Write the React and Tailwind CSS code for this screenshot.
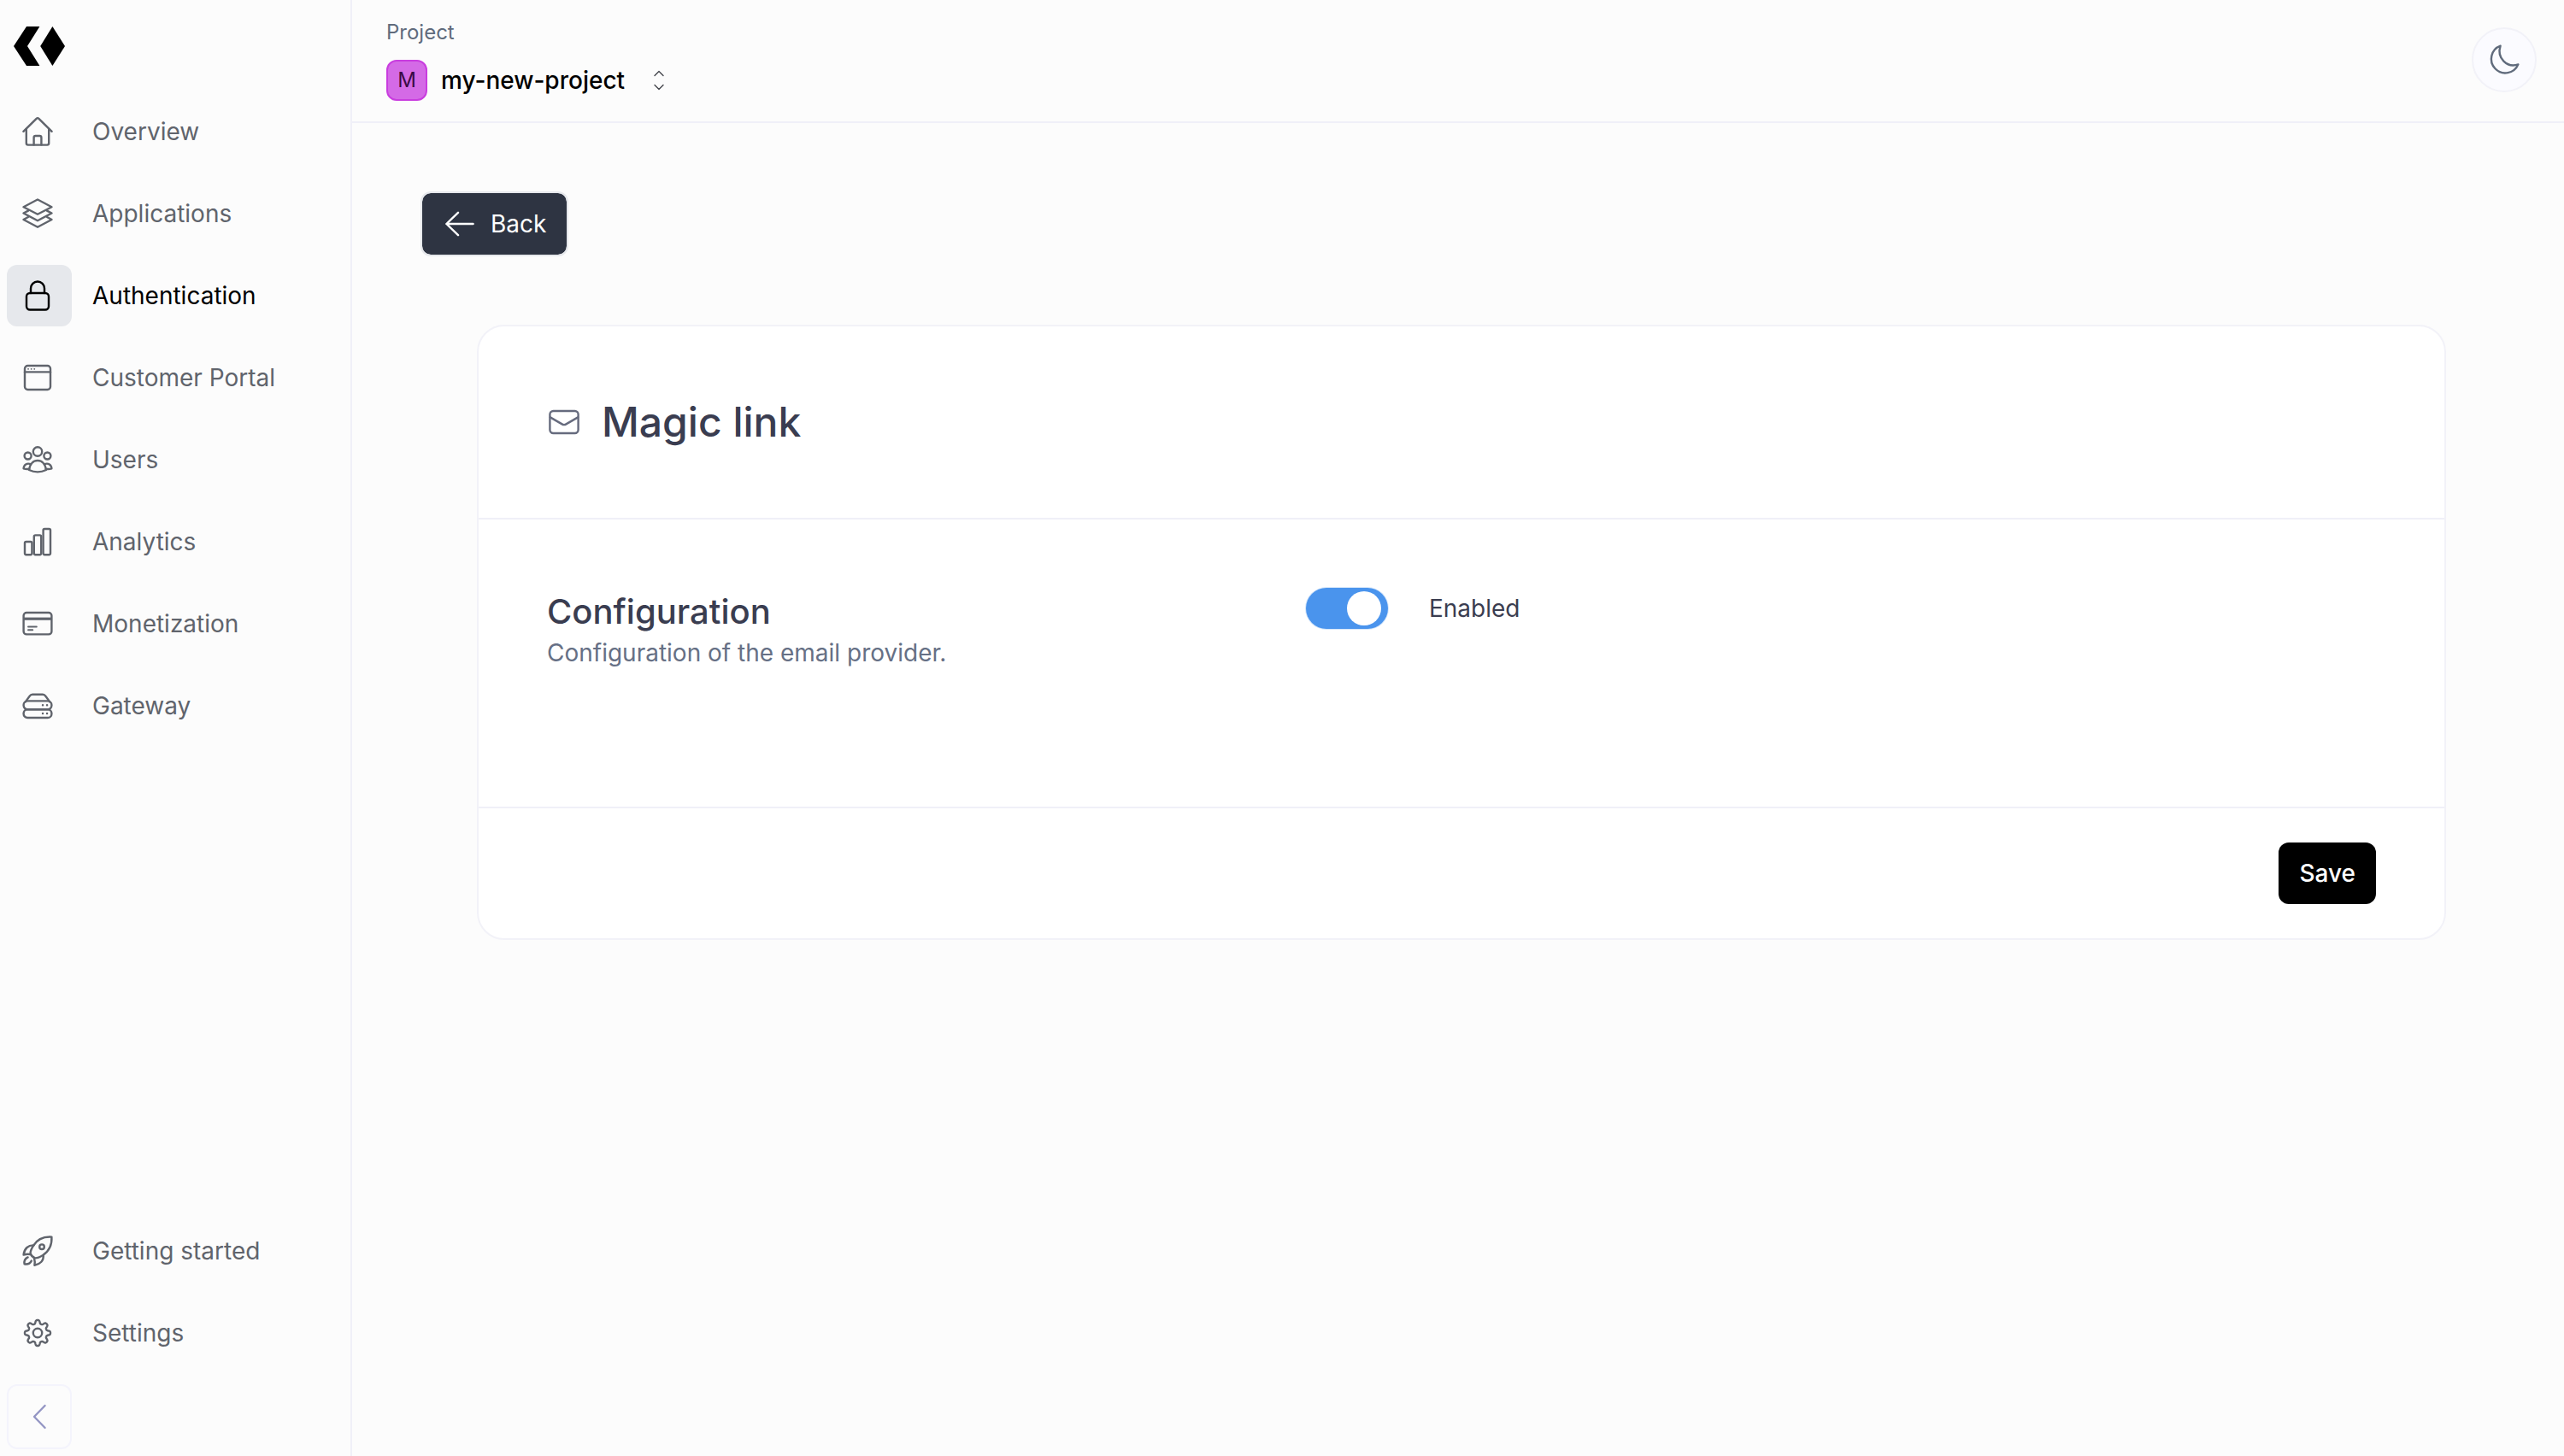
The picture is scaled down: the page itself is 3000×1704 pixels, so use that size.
import React from "react";

const svgProps = {
  viewBox: "0 0 40 40",
  width: 40,
  height: 40,
  fill: "none",
  stroke: "currentColor",
  strokeWidth: 2.4,
  strokeLinecap: "round",
  strokeLinejoin: "round",
  "aria-hidden": true,
};

const Icon = ({ children }) => (
  <svg {...svgProps} className="shrink-0">
    {children}
  </svg>
);

const HomeIcon = () => (
  <Icon>
    <path d="M3.4 19.8 L18.6 4.8 Q20 3.4 21.4 4.8 L36.6 19.8" />
    <path d="M6.8 17 V33.6 Q6.8 35.6 8.8 35.6 H31.2 Q33.2 35.6 33.2 33.6 V17" />
    <path d="M15.6 35.4 V27 Q15.6 25 17.6 25 H22.4 Q24.4 25 24.4 27 V35.4" />
  </Icon>
);

const LayersIcon = () => (
  <Icon>
    <path d="M20 3.5 L36.5 12.2 L20 20.8 L3.5 12.2 Z" />
    <path d="M9 16.6 L3.5 19.5 L20 28.2 L36.5 19.5 L31 16.6" />
    <path d="M9 24 L3.5 27 L20 35.8 L36.5 27 L31 24" />
  </Icon>
);

const LockIcon = () => (
  <Icon>
    <rect x="7" y="17" width="26" height="19.5" rx="4" />
    <path d="M12 17 V11.5 A8 8 0 0 1 28 11.5 V17" />
  </Icon>
);

const BrowserIcon = () => (
  <Icon>
    <rect x="5" y="6" width="30" height="28" rx="3.5" />
    <path d="M5 13.4 H35" />
    <path d="M9 9.8 H9.1 M12.6 9.8 H12.7 M16.2 9.8 H16.3" strokeWidth="1.8" />
  </Icon>
);

const UsersIcon = () => (
  <Icon>
    <circle cx="20" cy="10.5" r="5.2" />
    <circle cx="8.6" cy="15.5" r="4" />
    <circle cx="31.4" cy="15.5" r="4" />
    <path d="M10 32 C11 25 15 21 20 21 C25 21 29 25 30 32 C24 35 16 35 10 32 Z" />
    <path d="M12 25.2 C7.5 23.4 3.8 26 3.6 30.3 C5.5 31 8 31.1 10.2 30.8" />
    <path d="M28 25.2 C32.5 23.4 36.2 26 36.4 30.3 C34.5 31 32 31.1 29.8 30.8" />
  </Icon>
);

const BarsIcon = () => (
  <Icon>
    <rect x="5" y="20" width="8.4" height="15.2" rx="1.6" />
    <rect x="15.8" y="12.4" width="8.4" height="22.8" rx="1.6" />
    <rect x="26.6" y="5" width="8.4" height="30.2" rx="1.6" />
  </Icon>
);

const CardIcon = () => (
  <Icon>
    <rect x="3.6" y="7" width="32.8" height="25.4" rx="3.5" />
    <path d="M4 14.2 H36" strokeWidth="3.2" strokeLinecap="butt" />
    <path d="M9 23.4 H18.8 M9 27.2 H14.2" strokeWidth="2" />
  </Icon>
);

const ServerIcon = () => (
  <Icon>
    <rect x="3.6" y="14.4" width="32.8" height="9.8" rx="4.6" />
    <rect x="3.6" y="24.2" width="32.8" height="9.8" rx="4.6" />
    <path d="M5.6 15.6 L10.6 8.8 Q12 6.8 14 6.8 H26 Q28 6.8 29.4 8.8 L34.4 15.6" />
    <path d="M26 19.2 H26.1 M31 19.2 H31.1 M26 29 H26.1 M31 29 H31.1" />
  </Icon>
);

const RocketIcon = () => (
  <Icon>
    <path d="M36.4 3.6 C27 3 19.6 6.4 15 13.8 C12.6 17.6 11.4 20.2 11.6 23 C12.6 25.6 14.4 27.4 17 28.4 C19.8 28.6 22.6 27.2 26.2 25 C33.4 20.2 37 13 36.4 3.6 Z" />
    <circle cx="25" cy="15.2" r="2.8" />
    <path d="M15.6 13.4 C9.4 13 4.4 17 3.6 24.6 Q7.6 23.2 11.4 24" />
    <path d="M26.8 25 C27.2 31.2 23.2 35.6 16.4 36.8 Q17.2 32.6 16 28.6" />
    <path d="M8.6 27.4 C5.2 29 4 32 4.6 35.4 C8.2 36 11.2 34.8 12.8 31.6" />
  </Icon>
);

const gearPath = (() => {
  const points = [];
  const steps = 160;
  for (let i = 0; i < steps; i += 1) {
    const angle = (i / steps) * Math.PI * 2;
    const radius = 13 + (2 * Math.tanh(1.8 * Math.cos(8 * angle))) / Math.tanh(1.8);
    points.push(`${(20 + radius * Math.sin(angle)).toFixed(2)} ${(20 - radius * Math.cos(angle)).toFixed(2)}`);
  }
  return `M${points.join(" L")} Z`;
})();

const GearIcon = () => (
  <Icon>
    <path d={gearPath} />
    <circle cx="20" cy="20" r="5.2" />
  </Icon>
);

const mainNav = [
  { label: "Overview", Glyph: HomeIcon },
  { label: "Applications", Glyph: LayersIcon },
  { label: "Authentication", Glyph: LockIcon, active: true },
  { label: "Customer Portal", Glyph: BrowserIcon },
  { label: "Users", Glyph: UsersIcon },
  { label: "Analytics", Glyph: BarsIcon },
  { label: "Monetization", Glyph: CardIcon },
  { label: "Gateway", Glyph: ServerIcon },
];

const footerNav = [
  { label: "Getting started", Glyph: RocketIcon },
  { label: "Settings", Glyph: GearIcon },
];

function NavItem({ label, Glyph, active }) {
  return (
    <a
      href="#"
      aria-current={active ? "page" : undefined}
      className={active ? "flex items-center gap-6 text-black" : "flex items-center gap-6 text-[#60646c]"}
    >
      <span
        className={
          active
            ? "flex h-18 w-19 items-center rounded-xl bg-[#e6e8ec] pl-4"
            : "flex h-18 w-19 items-center rounded-xl pl-4"
        }
      >
        <Glyph />
      </span>
      {label}
    </a>
  );
}

function Sidebar() {
  return (
    <aside className="flex w-[412px] shrink-0 flex-col border-r-2 border-[#f0f0f8] p-2">
      <a href="#" aria-label="Home" className="mt-5 mb-10 ml-2 self-start">
        <svg viewBox="0 0 60 50" width="60" height="50" fill="black" aria-hidden="true">
          <path d="M15 3 H30.4 L16 26 L30.4 49 H15 L0 26 Z" />
          <path d="M45.4 3 L60 26 L45.4 49 L31.2 26 Z" />
        </svg>
      </a>
      <nav className="flex flex-1 flex-col gap-6">
        {mainNav.map((item) => (
          <NavItem key={item.label} {...item} />
        ))}
      </nav>
      <nav className="flex flex-col gap-6">
        {footerNav.map((item) => (
          <NavItem key={item.label} {...item} />
        ))}
      </nav>
      <button
        type="button"
        aria-label="Collapse sidebar"
        className="mt-6 flex size-19 items-center justify-center rounded-xl border-2 border-[#f4f4fc] text-[#9496c4]"
      >
        <Icon>
          <path d="M26.6 7 L14 20 L26.6 33" />
        </Icon>
      </button>
    </aside>
  );
}

function Header() {
  return (
    <header className="flex h-36 items-start justify-between border-b-2 border-[#f0f0f8] pr-8 pl-10">
      <div className="flex flex-col pt-5">
        <span className="text-2xl leading-9 text-[#606b7c]">Project</span>
        <button type="button" className="mt-3.5 flex items-center gap-4 font-medium text-black">
          <span className="flex size-12 items-center justify-center rounded-xl border-2 border-[#c93ddf] bg-[#d46ae6] text-2xl font-normal text-[#3b0a45]">
            M
          </span>
          my-new-project
          <svg
            viewBox="0 0 16 24"
            width="16"
            height="24"
            fill="none"
            stroke="#44464c"
            strokeWidth="1.4"
            strokeLinecap="round"
            strokeLinejoin="round"
            className="ml-4"
            aria-hidden="true"
          >
            <path d="M3 6.4 L8 1.4 L13 6.4" />
            <path d="M3 17.6 L8 22.6 L13 17.6" />
          </svg>
        </button>
      </div>
      <button
        type="button"
        aria-label="Switch to dark mode"
        className="mt-8 flex size-19 items-center justify-center rounded-full border-2 border-[#f2f2f8] bg-[#fbfbff] text-[#606b7c]"
      >
        <Icon>
          <path d="M15.6 3.6 A16.4 16.4 0 1 0 36.4 25.4 C30.4 27.4 24.2 26.4 19.4 21.6 C14.6 16.6 13.4 10.4 15.6 3.6 Z" />
        </Icon>
      </button>
    </header>
  );
}

function MagicLinkCard() {
  return (
    <form
      onSubmit={(event) => event.preventDefault()}
      className="mt-20 mr-[58px] ml-[66px] rounded-[32px] border-2 border-[#f2f2f8] bg-white"
    >
      <div className="flex items-center gap-6 p-20">
        <span className="text-[#666b7e]">
          <Icon>
            <rect x="3.4" y="7" width="33.2" height="26" rx="4" />
            <path d="M3.8 14.4 L17.6 22.4 Q20 23.8 22.4 22.4 L36.2 14.4" />
          </Icon>
        </span>
        <h1 className="text-5xl leading-16 font-medium text-[#3a3d50]">Magic link</h1>
      </div>
      <div className="flex gap-8 border-y-2 border-[#f0f0f8] p-20">
        <div className="w-2/5 shrink-0 pb-20">
          <h2 className="text-[40px] leading-14 font-medium text-[#3a3d50]">Configuration</h2>
          <p className="text-[#667085]">Configuration of the email provider.</p>
        </div>
        <label className="flex h-12 items-center gap-12 text-[#3a3d50]">
          <input
            type="checkbox"
            role="switch"
            defaultChecked
            className="relative h-12 w-24 appearance-none rounded-full bg-gray-300 ring-1 ring-[#d5e6fa] before:absolute before:top-1 before:left-1 before:size-10 before:rounded-full before:bg-white checked:bg-[#4a94ed] checked:before:left-12"
          />
          Enabled
        </label>
      </div>
      <div className="flex justify-end px-20 py-10">
        <button type="submit" className="h-18 rounded-xl bg-black px-6 font-medium text-white">
          Save
        </button>
      </div>
    </form>
  );
}

export default function App() {
  return (
    <div className="flex min-h-screen bg-[#fcfcfc] font-['Inter',sans-serif] text-[28px] leading-10">
      <Sidebar />
      <div className="flex min-w-0 flex-1 flex-col">
        <Header />
        <main className="p-20">
          <button
            type="button"
            className="flex h-19 items-center gap-4 rounded-xl border-2 border-[#e6e8ec] bg-[#2e3442] bg-clip-padding px-6 text-white"
          >
            <Icon>
              <path d="M35.6 20 H4.4 M18 6.8 L4.4 20 L18 33.2" />
            </Icon>
            Back
          </button>
          <MagicLinkCard />
        </main>
      </div>
    </div>
  );
}
